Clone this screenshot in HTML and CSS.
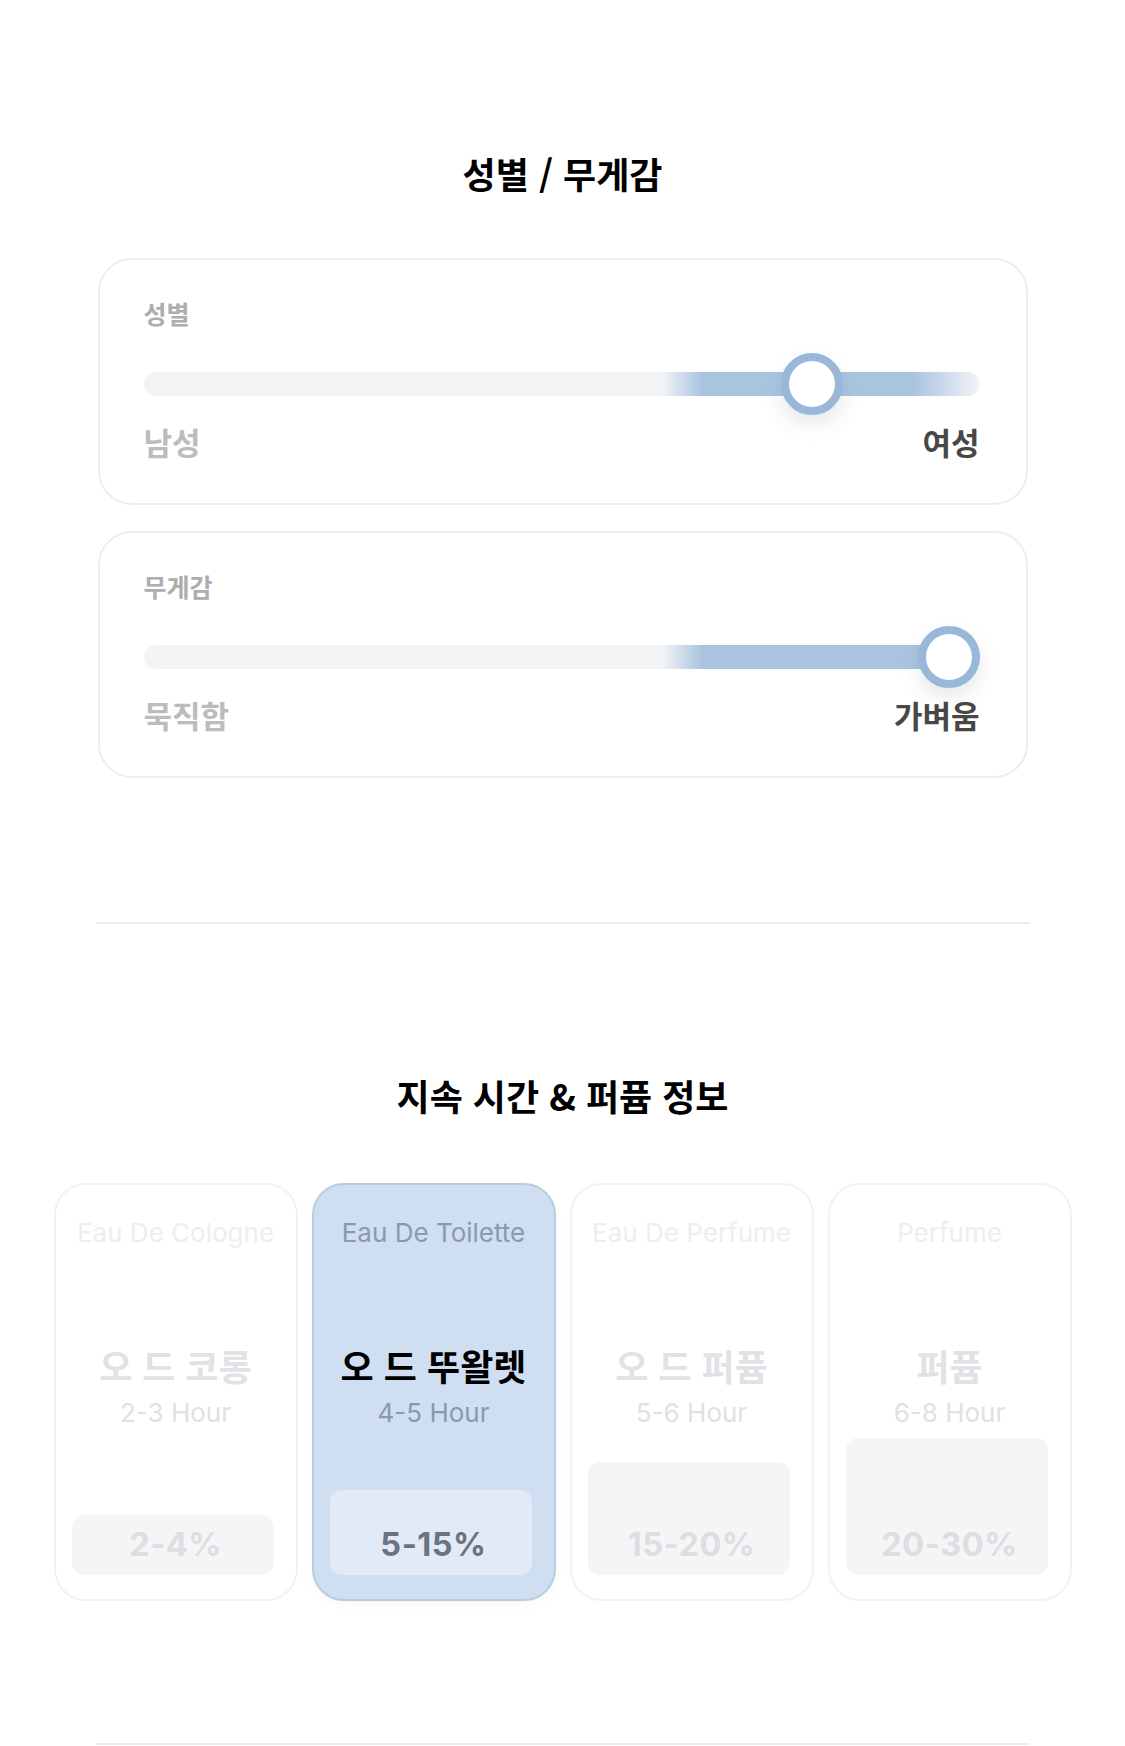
FILE: index.html
```html
<!DOCTYPE html>
<html lang="ko">
<head>
<meta charset="utf-8">
<title>성별 / 무게감 · 지속 시간 & 퍼퓸 정보</title>
<link rel="stylesheet" href="styles.css">
</head>
<body>
<main class="page">
  <section class="section">
    <h2 class="section-title">성별 / 무게감</h2>
    <div class="slider-list">
      <div class="slider-card">
        <div class="slider-label">성별</div>
        <div class="track">
          <div class="fill fill-band"></div>
          <div class="thumb" style="--value: 0.824"></div>
        </div>
        <div class="ends">
          <span class="end">남성</span>
          <span class="end end-active">여성</span>
        </div>
      </div>
      <div class="slider-card">
        <div class="slider-label">무게감</div>
        <div class="track">
          <div class="fill fill-open"></div>
          <div class="thumb" style="--value: 1"></div>
        </div>
        <div class="ends">
          <span class="end">묵직함</span>
          <span class="end end-active">가벼움</span>
        </div>
      </div>
    </div>
  </section>

  <hr class="divider">

  <section class="section section-last">
    <h2 class="section-title">지속 시간 &amp; 퍼퓸 정보</h2>
    <div class="conc-row">
      <div class="conc-card">
        <div class="conc-en">Eau De Cologne</div>
        <div class="conc-ko">오 드 코롱</div>
        <div class="conc-hour">2-3 Hour</div>
        <div class="conc-box" style="height: 60px"><span class="conc-pct">2-4%</span></div>
      </div>
      <div class="conc-card is-active">
        <div class="conc-en">Eau De Toilette</div>
        <div class="conc-ko">오 드 뚜왈렛</div>
        <div class="conc-hour">4-5 Hour</div>
        <div class="conc-box" style="height: 85px"><span class="conc-pct">5-15%</span></div>
      </div>
      <div class="conc-card">
        <div class="conc-en">Eau De Perfume</div>
        <div class="conc-ko">오 드 퍼퓸</div>
        <div class="conc-hour">5-6 Hour</div>
        <div class="conc-box" style="height: 113px"><span class="conc-pct">15-20%</span></div>
      </div>
      <div class="conc-card">
        <div class="conc-en">Perfume</div>
        <div class="conc-ko">퍼퓸</div>
        <div class="conc-hour">6-8 Hour</div>
        <div class="conc-box" style="height: 137px"><span class="conc-pct">20-30%</span></div>
      </div>
    </div>
  </section>

  <hr class="divider">
</main>
</body>
</html>
```

FILE: styles.css
```css
* {
  box-sizing: border-box;
}

html,
body {
  margin: 0;
  padding: 0;
  background: #ffffff;
}

body {
  font-family: "Noto Sans CJK KR", "Noto Sans", sans-serif;
  color: #111111;
}

.page {
  width: 930px;
  margin: 0 auto;
}

.section {
  padding: 151px 0 144px;
}

.section-last {
  padding: 149px 0 142px;
}

.section-title {
  margin: 0 0 63px;
  font-size: 36px;
  line-height: 44px;
  font-weight: 700;
  text-align: center;
  color: #000000;
}

.section-last .section-title {
  margin-bottom: 66px;
}

.divider {
  margin: 0 -2px;
  height: 2px;
  border: 0;
  background: #ececee;
}

/* ---------- sliders ---------- */

.slider-list {
  display: flex;
  flex-direction: column;
  gap: 26px;
}

.slider-card {
  height: 247px;
  display: flex;
  flex-direction: column;
  padding: 0 46px 0 44px;
  border: 2px solid #ebedef;
  border-radius: 34px;
  background: #ffffff;
}

.slider-label {
  margin-top: 37px;
  font-size: 25px;
  line-height: 32px;
  font-weight: 700;
  color: #adadad;
}

.track {
  position: relative;
  margin-top: 43px;
  height: 24px;
  border-radius: 12px;
  background: #f3f4f6;
}

.fill {
  position: absolute;
  top: 0;
  bottom: 0;
  left: 62%;
  right: 0;
  border-radius: 0 12px 12px 0;
}

.fill-band {
  background: linear-gradient(to right,
    rgba(170, 196, 224, 0) 0,
    #aac4e0 40px,
    #aac4e0 calc(100% - 66px),
    rgba(170, 196, 224, 0) 100%);
}

.fill-open {
  background: linear-gradient(to right,
    rgba(170, 196, 224, 0) 0,
    #aac4e0 40px,
    #aac4e0 100%);
}

.thumb {
  position: absolute;
  top: 50%;
  left: calc((100% - 62px) * var(--value));
  width: 62px;
  height: 62px;
  margin-top: -31px;
  border: 8px solid #99b7d9;
  border-radius: 50%;
  background: #ffffff;
  box-shadow: 0 10px 20px rgba(60, 70, 90, 0.12);
}

.ends {
  margin-top: 27px;
  display: flex;
  justify-content: space-between;
  font-size: 31px;
  line-height: 38px;
  font-weight: 700;
}

.end {
  color: #bcbcbc;
}

.end-active {
  color: #474747;
}

/* ---------- concentration cards ---------- */

.conc-row {
  width: 1018px;
  margin-left: -44px;
  display: grid;
  grid-template-columns: repeat(4, 244px);
  gap: 14px;
}

.conc-card {
  height: 418px;
  display: flex;
  flex-direction: column;
  align-items: stretch;
  padding: 33px 16px 24px;
  border: 2px solid #f1f2f4;
  border-radius: 32px;
  background: #ffffff;
  text-align: center;
}

.conc-en {
  margin: 0 -10px;
  font-family: "Inter", "Noto Sans", sans-serif;
  font-size: 26px;
  line-height: 30px;
  color: #eceef0;
  white-space: nowrap;
}

.conc-ko {
  margin-top: 95px;
  font-size: 36px;
  line-height: 44px;
  font-weight: 700;
  color: #e0e2e5;
  white-space: nowrap;
}

.conc-hour {
  margin-top: 11px;
  font-family: "Inter", "Noto Sans", sans-serif;
  font-size: 26px;
  line-height: 30px;
  color: #dfe1e4;
}

.conc-box {
  margin-top: auto;
  margin-right: 6px;
  display: flex;
  align-items: flex-end;
  justify-content: center;
  padding: 0 0 14px 6px;
  border-radius: 12px;
  background: #f4f5f6;
}

.conc-pct {
  font-family: "Inter", "Noto Sans", sans-serif;
  font-size: 32.5px;
  line-height: 32px;
  font-weight: 700;
  letter-spacing: 0.5px;
  color: #dcdee1;
}

.conc-card.is-active {
  background: #cfdff1;
  border-color: #b9cce2;
  box-shadow: 0 4px 10px rgba(120, 130, 100, 0.05);
}

.is-active .conc-en,
.is-active .conc-hour {
  color: #8a99ab;
}

.is-active .conc-ko {
  color: #000000;
}

.is-active .conc-box {
  background: #e1eaf6;
}

.is-active .conc-pct {
  color: #6b7380;
}
```
